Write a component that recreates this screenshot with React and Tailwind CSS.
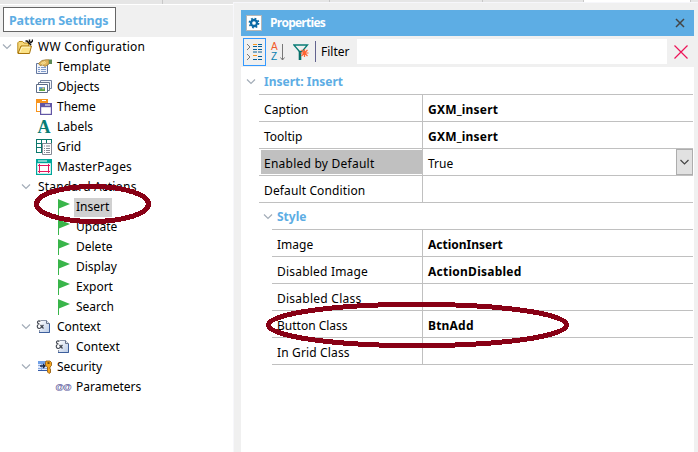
import React from "react";

const Chevron = ({ className = "" }) => (
  <svg className={`shrink-0 ${className}`} width="10" height="8" viewBox="0 0 10 8" fill="none" stroke="#a3adb8" strokeWidth="1.2">
    <path d="M1 1.5 L5 5.5 L9 1.5" />
  </svg>
);

const Svg = ({ children }) => (
  <svg className="shrink-0" width="16" height="16" viewBox="0 0 16 16">{children}</svg>
);

const FolderIcon = () => (
  <Svg>
    <path d="M.8 14V3.8L2 2.5H5.5L7 4H11.5V14Z" fill="#f6d879" stroke="#b98a1c" />
    <path d="M1 14.5L4 7H14.5L12.5 14.5Z" fill="#fbe287" stroke="#a9740a" />
    <path d="M3 13L5 8.2H13" stroke="#fff6c4" fill="none" />
    <path d="M8.5 2H10L11.5 3.5L14 6" stroke="#111" strokeWidth="1.6" fill="none" />
    <path d="M12.5 .5V2.5L14 3.5L15.5 2V.5" stroke="#111" strokeWidth="1.4" fill="none" />
  </Svg>
);
const TemplateIcon = () => (
  <Svg>
    <path d="M.5 4.5H11.5V14.5H.5Z" fill="#f1f4fb" stroke="#6377a0" />
    <path d="M2 8.5H4M5 8.5H10M2 10.5H4M5 10.5H10M2 12.5H4M5 12.5H10" stroke="#7f9bcb" />
    <path d="M2.5 4.5L6 1.5L10 .8H13V5L9 7.5L7 6L4 6.5Z" fill="#e0b45a" stroke="#9a7833" strokeWidth=".8" />
    <path d="M5 4.5L9 2.5M6 5.5L10 3.5" stroke="#fff0ad" strokeWidth=".8" />
    <path d="M13 .5H16V5H13Z" fill="#5b8a55" />
  </Svg>
);
const ObjectsIcon = () => (
  <Svg>
    <path d="M4.5 1.5H15.5V9.5H4.5Z" fill="#f3f5fa" stroke="#7583a0" />
    <path d="M2.5 3.5H13.5V11.5H2.5Z" fill="#f8f9fc" stroke="#69778f" />
    <path d="M.5 5.5H11.5V13.5H.5Z" fill="#fff" stroke="#5c6a85" />
    <path d="M3 8H9V12H3Z" fill="#6d9be0" />
    <path d="M3 12L5 9L7 11L9 9V12Z" fill="#5fa83e" />
    <path d="M6.5 8.5H8V10H6.5Z" fill="#f4d44d" />
  </Svg>
);
const ThemeIcon = () => (
  <Svg>
    <path d="M0 0H12V5H11V4H1V12H4V13H0Z" fill="#f7941d" />
    <path d="M0 0H12V4H0Z" fill="#f7941d" />
    <path d="M6 1.5H10" stroke="#fff" />
    <path d="M4 4H16V16H4Z" fill="#6256a5" />
    <path d="M5.2 8.2H14.8V14.8H5.2Z" fill="#fff" />
    <path d="M9 6H14" stroke="#fff" />
  </Svg>
);
const LabelsIcon = () => (
  <span className="flex w-4 shrink-0 items-center justify-center font-['Liberation_Serif',serif] text-[18px] font-bold leading-4 text-[#087c75]">A</span>
);
const GridIcon = () => (
  <Svg>
    <path d="M0 .5H16M0 4.5H16M0 8.5H6M0 13.5H6M.5 0V14M5.5 1V14M10.5 1V5M15.5 0V5" stroke="#0b776c" fill="none" />
    <path d="M6.5 4.5H15.5V15.5H6.5Z" fill="#fff" stroke="#858994" />
    <path d="M8 7H9M10 7H14M8 9.5H9M10 9.5H14M8 11.5H9M10 11.5H14M8 13.5H9M10 13.5H14" stroke="#858994" />
  </Svg>
);
const MasterIcon = () => (
  <Svg>
    <path d="M0 0H16V16H0Z" fill="#00a79b" />
    <path d="M1.2 4.2H14.8V14.8H1.2Z" fill="#fff" />
    <path d="M2 2H11" stroke="#fff" strokeWidth="1" />
    <path d="M2 6.5H14M2 12.5H14M3.5 5V14M12.5 5V14" stroke="#e5175c" fill="none" />
  </Svg>
);
const FlagIcon = () => (
  <Svg>
    <path d="M3 0V16H4V9.5L15 5L4 .5Z" fill="#39b54a" />
  </Svg>
);
const ContextIcon = () => (
  <Svg>
    <defs>
      <linearGradient id="page" x1="0" y1="0" x2="1" y2="1">
        <stop offset="0" stopColor="#fff" /><stop offset="1" stopColor="#b9cae5" />
      </linearGradient>
    </defs>
    <path d="M3.5 1.5H10.5L13.5 4.5V13.5H3.5Z" fill="url(#page)" stroke="#8993a8" />
    <path d="M3 13.5H13.5V5" stroke="#3d5f9c" fill="none" />
    <path d="M10.5 1.5V4.5H13.5" fill="#dce3ee" stroke="#68748b" />
    <path d="M0 1H4.5V11H0Z" fill="#fff" />
    <path d="M4.3 2.5C3 1.2 1.2 2.2 1.5 3.7C1.7 4.8 2.6 5 3.6 5C2 5 1.2 6.2 1.3 7.7C1.5 9.8 3.8 10 5 8.5L7.5 6M4.5 6L7.5 9.5" fill="none" stroke="#454a54" strokeWidth="1.2" />
  </Svg>
);
const SecurityIcon = () => (
  <Svg>
    <path d="M2 2.5H13V11.5H2Z" fill="#dfe9fb" />
    <path d="M2 2H13V5H2Z" fill="#6f9fe6" />
    <path d="M2 6.5H12M2 9.5H12M5.5 5V11" stroke="#8eace0" />
    <path d="M2 11.5H11" stroke="#355aa6" />
    <path d="M4 7H9M7 5L9 7L7 9" stroke="#172647" strokeWidth="1.3" fill="none" />
    <path d="M10 2H14L15.5 3.5V6.5L14 8V10L15 11L14 12L15 13L13 14.5L11.5 13V8L9.5 6.5V3.5Z" fill="#f3a51e" stroke="#8c5308" strokeWidth=".8" />
    <path d="M11.5 3.3H13.5V4.8H11.5Z" fill="#513408" />
  </Svg>
);
const ParamsIcon = () => (
  <span className="flex w-4 shrink-0 justify-center whitespace-nowrap pb-px font-['Liberation_Sans',sans-serif] text-[9px] font-bold leading-4 tracking-[-1px] text-[#5b589c]">@@</span>
);

/* lv is the depth of the row; open rows carry a chevron */
const tree = [
  { t: "WW Configuration", lv: 0, icon: FolderIcon, track: "tracking-[0.25px]" },
  { t: "Template", lv: 1, icon: TemplateIcon, track: "tracking-[0.2px]" },
  { t: "Objects", lv: 1, icon: ObjectsIcon },
  { t: "Theme", lv: 1, icon: ThemeIcon },
  { t: "Labels", lv: 1, icon: LabelsIcon },
  { t: "Grid", lv: 1, icon: GridIcon },
  { t: "MasterPages", lv: 1, icon: MasterIcon, track: "tracking-[0.15px]" },
  { t: "Standard Actions", lv: 1, open: true, track: "tracking-[0.18px]" },
  { t: "Insert", lv: 2, icon: FlagIcon, selected: true },
  { t: "Update", lv: 2, icon: FlagIcon },
  { t: "Delete", lv: 2, icon: FlagIcon },
  { t: "Display", lv: 2, icon: FlagIcon },
  { t: "Export", lv: 2, icon: FlagIcon },
  { t: "Search", lv: 2, icon: FlagIcon },
  { t: "Context", lv: 1, open: true, icon: ContextIcon },
  { t: "Context", lv: 2, icon: ContextIcon },
  { t: "Security", lv: 1, open: true, icon: SecurityIcon },
  { t: "Parameters", lv: 2, icon: ParamsIcon },
];
const indents = ["pl-0.5", "pl-[21px]", "pl-10"];

function TreeRow({ item }) {
  const Icon = item.icon;
  return (
    <li className={`flex h-5 items-center ${indents[item.lv]}`}>
      {item.lv === 0 || item.open ? <Chevron className="mr-[5px]" /> : <span className="w-[15px] shrink-0" />}
      {Icon && <Icon />}
      <span className={`h-[19px] whitespace-nowrap px-0.5 leading-[18px] ${Icon ? "ml-[3px]" : ""} ${item.track || ""} ${item.selected ? "bg-[#d0d0d0] pr-[3px]" : ""}`}>{item.t}</span>
    </li>
  );
}

function Section({ title, rows, nested }) {
  return (
    <section>
      <div className={`flex h-[27px] items-center ${nested ? "pl-[22px]" : "pl-[5px]"}`}>
        <Chevron />
        <div className={`h-[27px] flex-1 border-b border-[#c0c0c0] font-bold leading-[28px] text-[#5dade4] ${nested ? "ml-[-1px] pl-[5px]" : "ml-[3px] pl-[5px]"}`}>{title}</div>
      </div>
      {rows.map(({ name, value, selected, nt = "", vt = "" }) => (
        <div key={name} className={`flex h-[27px] border-b border-[#c0c0c0] leading-[29px] ${nested ? "ml-[31px]" : "ml-[18px]"}`}>
          <div className={`shrink-0 border-r border-[#c0c0c0] ${nested ? "w-[151px] pl-[5px]" : "w-[164px] py-px pl-0.5"}`}>
            <div className={`${nt} ${nested ? "" : "h-6 pl-[3px] leading-[27px]"} ${selected ? "bg-[#c0c0c0]" : ""}`}>{name}</div>
          </div>
          <div className={`flex-1 pl-[5px] ${vt} ${selected ? "" : "font-bold"}`}>{value}</div>
          {selected && (
            <button className="flex h-[26px] w-[17px] items-center justify-center border border-[#adadad] bg-[#e1e1e1]">
              <svg width="9" height="6" viewBox="0 0 9 6" fill="none" stroke="#444" strokeWidth="1.2"><path d="M.5 1L4.5 5L8.5 1" /></svg>
            </button>
          )}
        </div>
      ))}
    </section>
  );
}

export default function App() {
  return (
    <div className="relative flex h-[452px] w-[698px] flex-col overflow-hidden bg-[#f0f0f0] font-['Noto_Sans',sans-serif] text-[12px] text-black">
      <div className="flex h-0.5 shrink-0 bg-[#e6e6e6]">
        <span className="w-[163px] border-r border-[#c8c8c8]" />
        <span className="w-[167px] border-r border-[#c8c8c8]" />
        <span className="w-[153px] border-r border-[#c8c8c8]" />
        <span className="w-[101px] border-r border-[#c8c8c8]" />
        <span className="w-[107px] border-r border-[#c8c8c8] bg-white" />
      </div>
      <div className="flex min-h-0 flex-1">
        <aside className="flex w-[233px] shrink-0 flex-col">
          <div className="flex h-[3px] shrink-0 border-b border-white bg-[#e6e6e6]"><span className="w-[163px] border-r border-[#c8c8c8]" /></div>
          <div className="h-8 shrink-0 pl-[3px] pt-0.5">
            <div className="h-[25px] w-[113px] border border-[#666] bg-white pl-[5px] text-[12.5px] font-bold leading-[25px] tracking-[-0.15px] text-[#5dade4]">Pattern Settings</div>
          </div>
          <ul className="flex-1 bg-white">
            {tree.map((item, i) => <TreeRow key={i} item={item} />)}
          </ul>
        </aside>
        <main className="flex min-w-0 flex-1 flex-col border-l border-t border-[#f7f7fb] pl-[7px] pr-1 pt-[7px]">
          <header className="flex h-[26px] shrink-0 items-center bg-[#5dade4] pl-[5px] pr-[9px]">
            <span className="flex h-4 w-4 items-center justify-center border border-[#b6b6b6] bg-white">
              <svg width="12" height="12" viewBox="0 0 12 12">
                <g fill="none" stroke="#0a6aa6">
                  <circle cx="6" cy="6" r="3" strokeWidth="2.3" />
                  <circle cx="6" cy="6" r="4.6" strokeWidth="1.6" strokeDasharray="1.8 1.81" />
                </g>
              </svg>
            </span>
            <span className="ml-2 flex-1 font-['Open_Sans',sans-serif] font-bold tracking-[-0.75px] text-white">Properties</span>
            <svg width="10" height="10" viewBox="0 0 10 10" stroke="#444" strokeWidth="1.5"><path d="M1 1L9 9M9 1L1 9" /></svg>
          </header>
          <div className="flex h-[31px] shrink-0 items-center pl-0.5 pr-[5px]">
            <button className="flex h-7 w-[23px] shrink-0 items-center justify-center border border-[#3399ff]">
              <svg width="17" height="18" viewBox="0 0 17 18" fill="none">
                <path d="M1 1L4 4L1 7M1 11L4 14L1 17" stroke="#777" />
                <path d="M7 1.5H11M7 12.5H11" stroke="#f7941d" />
                <path d="M12 1.5H16M7 3.5H11M12 3.5H16M7 6.5H11M12 6.5H16M7 9H11M12 9H16M12 13.5H16M7 16.5H11M12 16.5H16" stroke="#075f96" />
              </svg>
            </button>
            <span className="ml-[5px] flex w-[8px] shrink-0 flex-col font-['Liberation_Sans',sans-serif] text-[10px] leading-[11px]">
              <span className="-mb-px text-[#f15a29]">A</span><span className="text-[#087fb0]">Z</span>
            </span>
            <svg className="ml-px shrink-0" width="5" height="18" viewBox="0 0 5 18" stroke="#777" fill="none"><path d="M2.5 1V17M.5 14.5L2.5 17L4.5 14.5" /></svg>
            <svg className="ml-2 shrink-0" width="16" height="16" viewBox="0 0 16 16" fill="none">
              <path d="M.8 1H14.5L9 7.5H6.5Z" stroke="#087c75" strokeWidth="1.3" />
              <path d="M7 7V16" stroke="#086f69" strokeWidth="2.6" />
              <path d="M11.5 5V13M8.5 6L14.5 12M14.5 6L8.5 12M7.5 9H15.5" stroke="#ff6333" strokeWidth="1.2" />
            </svg>
            <span className="ml-1.5 h-[21px] w-px shrink-0 bg-[#62638e]" />
            <span className="ml-[5px] w-[36px] shrink-0">Filter</span>
            <span className="h-[25px] w-[310px] shrink-0 bg-white" />
            <svg className="ml-[7px] shrink-0" width="14" height="14" viewBox="0 0 14 14" stroke="#ed1458" strokeWidth="1.2"><path d="M.5.5L13.5 13.5M13.5.5L.5 13.5" /></svg>
          </div>
          <div className="flex-1 bg-white pr-px pt-px">
            <Section title="Insert: Insert" rows={[
              { name: "Caption", value: "GXM_insert", nt: "tracking-[0.1px]", vt: "tracking-[0.2px]" },
              { name: "Tooltip", value: "GXM_insert", vt: "tracking-[0.2px]" },
              { name: "Enabled by Default", value: "True", selected: true, nt: "tracking-[0.24px]" },
              { name: "Default Condition", value: "", nt: "tracking-[0.13px]" },
            ]} />
            <Section nested title="Style" rows={[
              { name: "Image", value: "ActionInsert" },
              { name: "Disabled Image", value: "ActionDisabled", nt: "tracking-[0.2px]", vt: "tracking-[0.25px]" },
              { name: "Disabled Class", value: "", nt: "tracking-[0.25px]" },
              { name: "Button Class", value: "BtnAdd", vt: "tracking-[0.2px]" },
              { name: "In Grid Class", value: "", nt: "tracking-[0.15px]" },
            ]} />
          </div>
        </main>
      </div>
      <svg className="pointer-events-none absolute left-0 top-0" width="698" height="452" fill="none" stroke="#880015" strokeWidth="5" shapeRendering="crispEdges">
        <ellipse cx="92.5" cy="204" rx="56" ry="17.5" />
        <ellipse cx="417.5" cy="325" rx="149" ry="20.7" />
      </svg>
    </div>
  );
}
